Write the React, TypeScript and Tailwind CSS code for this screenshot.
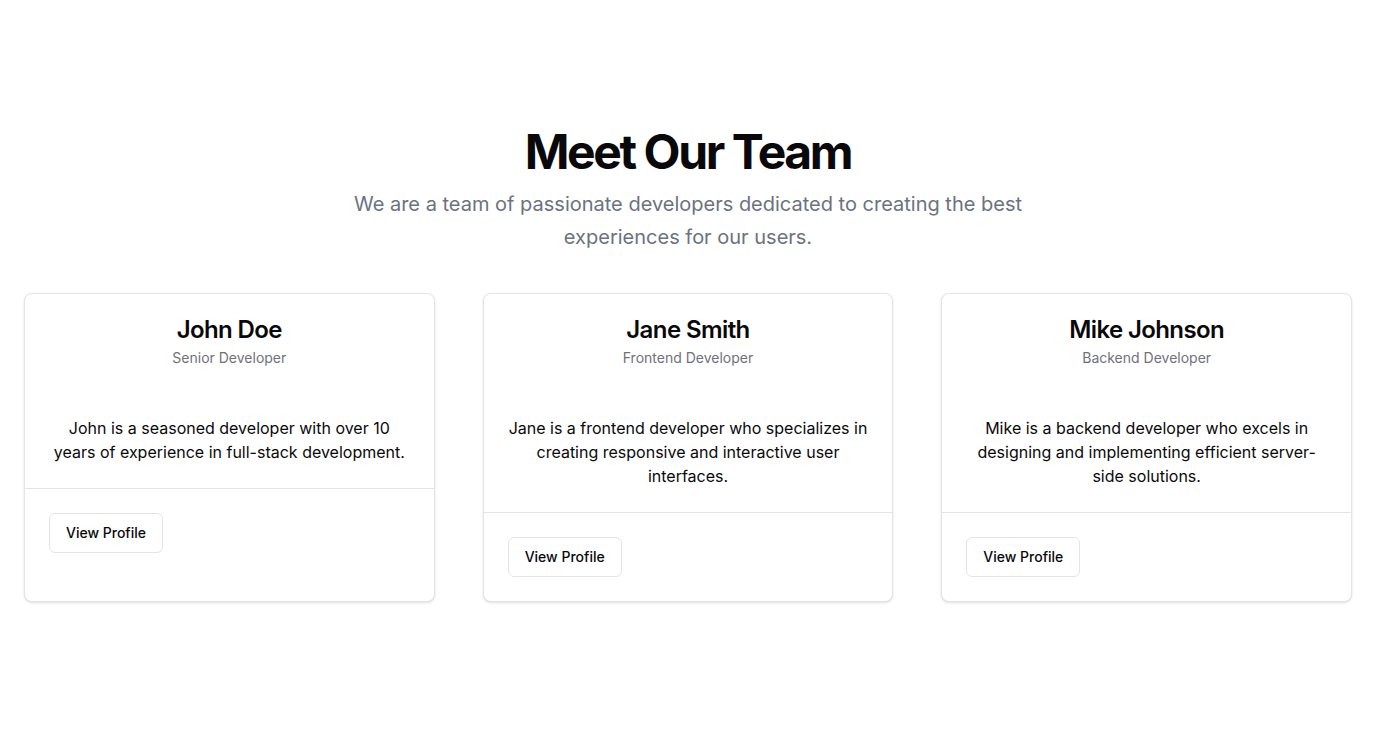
import React from "react";

interface Member {
  name: string;
  role: string;
  bio: string;
}

const team: Member[] = [
  {
    name: "John Doe",
    role: "Senior Developer",
    bio: "John is a seasoned developer with over 10 years of experience in full-stack development.",
  },
  {
    name: "Jane Smith",
    role: "Frontend Developer",
    bio: "Jane is a frontend developer who specializes in creating responsive and interactive user interfaces.",
  },
  {
    name: "Mike Johnson",
    role: "Backend Developer",
    bio: "Mike is a backend developer who excels in designing and implementing efficient server-side solutions.",
  },
];

const MemberCard: React.FC<{ member: Member }> = ({ member }) => {
  return (
    <div className="rounded-lg border border-[#e4e4e7] bg-white shadow-sm">
      <div className="flex flex-col items-center gap-1.5 p-6 text-center">
        <h3 className="text-2xl font-semibold leading-none tracking-tight text-[#09090b]">
          {member.name}
        </h3>
        <p className="text-sm text-[#71717a]">{member.role}</p>
      </div>
      <div className="p-6 text-center text-base text-[#09090b]">
        <p>{member.bio}</p>
      </div>
      <div className="flex items-center border-t border-[#e4e4e7] p-6">
        <button className="inline-flex h-10 items-center justify-center rounded-md border border-[#e4e4e7] bg-white px-4 py-2 text-sm font-medium text-[#09090b]">
          View Profile
        </button>
      </div>
    </div>
  );
};

export default function App() {
  return (
    <div className="min-h-screen bg-white font-['Inter',sans-serif]">
      <section className="px-6 pt-32 pb-24">
        <div className="flex flex-col items-center text-center">
          <h2 className="text-5xl font-bold leading-none tracking-tighter text-[#09090b]">
            Meet Our Team
          </h2>
          <p className="mt-3 max-w-[700px] text-xl leading-relaxed text-[#6b7280]">
            We are a team of passionate developers dedicated to creating the
            best experiences for our users.
          </p>
        </div>
        <div className="mt-10 grid grid-cols-3 gap-12">
          {team.map((m) => (
            <MemberCard key={m.name} member={m} />
          ))}
        </div>
      </section>
    </div>
  );
}
